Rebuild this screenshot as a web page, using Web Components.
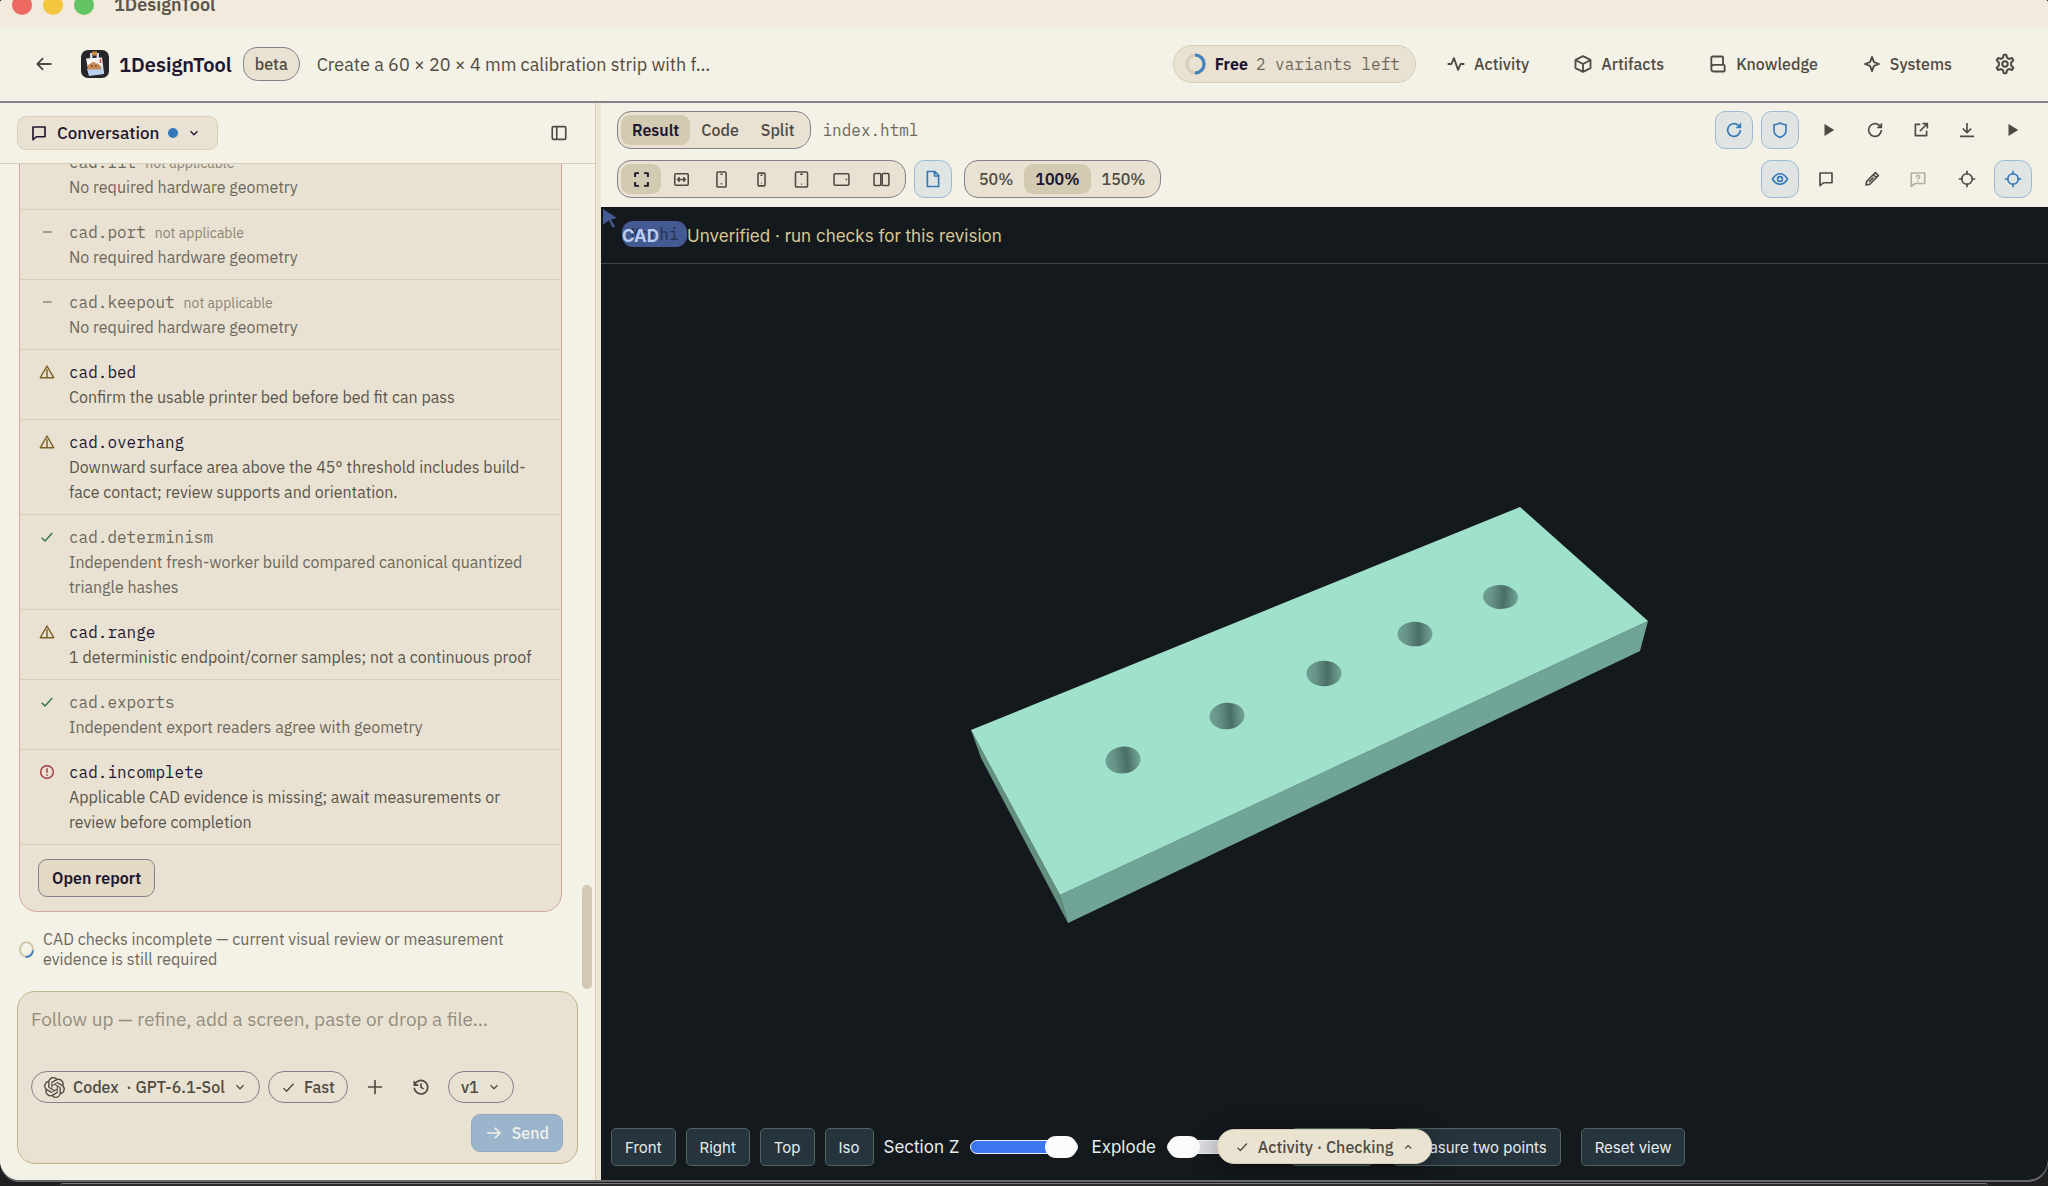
<!DOCTYPE html>
<html lang="en">
<head>
<meta charset="utf-8">
<title>1DesignTool</title>
<style>
  html { height: 100%; background: #1f1e21; }
  body {
    margin: 0; height: 100%; display: flex; flex-direction: column; overflow: hidden;
    --sans: "IBM Plex Sans", Roboto, "Liberation Sans", sans-serif;
    --mono: "IBM Plex Mono", "Liberation Mono", monospace;
    font-family: var(--sans); font-size: 16px; color: #4f4b43;
    --paper: #f4f1e6; --card: #e9e2d2; --sel: #d3cab2; --ink: #1d1730; --text: #4f4b43;
    --muted: #6d685c; --faint: #8b8577; --line: #d8cfb8; --edge: #85808a; --blue: #3579b8;
  }
</style>
</head>
<body>
<design-app></design-app>
<under-window></under-window>
<script>
const ICONS = {
  back: '<path d="M21 12H4M11 5l-7 7 7 7"/>',
  forward: '<path d="M3 12h17M13 5l7 7-7 7"/>',
  chat: '<path d="M4 4h16v13H8.500l-4.500 4z"/>',
  down: '<path d="M6 9l6 6 6-6"/>',
  up: '<path d="M6 15l6-6 6 6"/>',
  panel: '<rect x="3" y="3.500" width="18" height="17" rx="1.500"/><path d="M9 4v16"/>',
  pulse: '<path d="M2 12h4.500l3-7 5 14 3-7H22"/>',
  box: '<path d="M12 2.500l9 4.500v10l-9 4.500L3 17V7zM3.500 7.500L12 12l8.500-4.500M12 12v9"/>',
  book: '<path d="M18 13V4a1 1 0 0 0-1-1H6a2 2 0 0 0-2 2v13a3 3 0 0 0 3 3h12a1 1 0 0 0 1-1v-6a1 1 0 0 0-1-1H7a3 3 0 0 0-3 3"/>',
  spark: '<path d="M12 3.500l2.300 6.200 6.200 2.300-6.200 2.300L12 20.500l-2.300-6.200L3.500 12l6.200-2.300z"/>',
  gear: '<path d="M9.800 5.200L10.600 2h2.800l.8 3.200 2.200 1.300 3.200-1 1.500 2.500-2.400 2.300v3.400l2.400 2.300-1.500 2.500-3.200-1-2.200 1.300-.8 3.200h-2.800l-.8-3.200-2.200-1.300-3.200 1L2.900 16l2.400-2.300v-3.400L2.900 8l1.500-2.500 3.200 1z"/><circle cx="12" cy="12" r="3"/>',
  refresh: '<path d="M20.500 12a8.500 8.500 0 1 1-3-6.500l2.500 2.500M20.500 3v5.500H15"/>',
  shield: '<path d="M12 2.500c2.500 1.800 5 2.500 8 2.500v8c0 4-3 7-8 9-5-2-8-5-8-9V5c3 0 5.500-.7 8-2.500z"/>',
  play: '<path d="M6 4l13 8-13 8z" fill="currentColor" stroke="none"/>',
  open: '<path d="M11 4.500H4.500v15h15V13M14 3.500h6.500V10M20 4l-9.500 9.500"/>',
  download: '<path d="M12 2.500v13M6.500 10l5.500 5.500L17.500 10M2.500 20.500h19"/>',
  eye: '<path d="M2 12c3-5 6.500-7 10-7s7 2 10 7c-3 5-6.500 7-10 7s-7-2-10-7z"/><circle cx="12" cy="12" r="3.200"/>',
  pencil: '<path d="M4 20l1-5L16.500 3.500l4 4L9 19zM14 6.500l3.500 3.500M8 16l6-6"/>',
  ask: '<path d="M3 4h18v14H8l-5 4z"/><path d="M9.800 9.500c0-3 4.600-2.800 4.400-.2-.1 1.500-2.200 1.500-2.200 3.200M12 14.500v1.500"/>',
  target: '<circle cx="12" cy="12" r="7"/><path d="M12 1v5M12 18v5M1 12h5M18 12h5"/>',
  full: '<path d="M3 8.500V3h5.500M15.500 3H21v5.500M21 15.500V21h-5.500M8.500 21H3v-5.500" stroke-width="2.800"/>',
  fit: '<rect x="2.500" y="4" width="19" height="16" rx="1.500"/><path d="M6.500 12h11M9.500 9l-3 3 3 3M14.500 9l3 3-3 3"/>',
  phone: '<rect x="5.500" y="1.500" width="13" height="21" rx="1.500"/><path d="M10.500 4.500h3M11 18h2"/>',
  phoneS: '<rect x="7" y="3" width="10" height="18" rx="1.500"/><path d="M10.500 6h3M11.500 17h1"/>',
  tablet: '<rect x="3.500" y="1.500" width="17" height="21" rx="1.500"/><path d="M10 4.500h4M11.500 18.500h1"/>',
  tabletL: '<rect x="1.500" y="4" width="21" height="16" rx="1.500"/><path d="M19 11v2"/>',
  fold: '<rect x="1.500" y="3.500" width="9.500" height="17" rx="1.500"/><rect x="13" y="3.500" width="9.500" height="17" rx="1.500"/>',
  file: '<path d="M4.500 2h10l5 5v15h-15zM14 2.500V8h5"/>',
  check: '<path d="M4 13l5 5L20 6"/>',
  plus: '<path d="M12 2.500v19M2.500 12h19"/>',
  history: '<path d="M3 4v5.500h5.500M3.500 9.200A9 9 0 1 1 3 13M12 7v5.500l3.500 2"/>',
  dash: '<path d="M6 12h13"/>',
  warn: '<path d="M12 3L22 20.500H2z"/><path d="M12 8v12"/>',
  error: '<circle cx="12" cy="12" r="9.500"/><path d="M12 6.500v6.500M12 15.500v2"/>',
  gpt: '<path fill="currentColor" stroke="none" d="M22.2819 9.8211a5.9847 5.9847 0 0 0-.5157-4.9108 6.0462 6.0462 0 0 0-6.5098-2.9A6.0651 6.0651 0 0 0 4.9807 4.1818a5.9847 5.9847 0 0 0-3.9977 2.9 6.0462 6.0462 0 0 0 .7427 7.0966 5.98 5.98 0 0 0 .511 4.9107 6.051 6.051 0 0 0 6.5146 2.9001A5.9847 5.9847 0 0 0 13.2599 24a6.0557 6.0557 0 0 0 5.7718-4.2058 5.9894 5.9894 0 0 0 3.9977-2.9001 6.0557 6.0557 0 0 0-.7475-7.0729zm-9.022 12.6081a4.4755 4.4755 0 0 1-2.8764-1.0408l.1419-.0804 4.7783-2.7582a.7948.7948 0 0 0 .3927-.6813v-6.7369l2.02 1.1686a.071.071 0 0 1 .038.052v5.5826a4.504 4.504 0 0 1-4.4945 4.4944zm-9.6607-4.1254a4.4708 4.4708 0 0 1-.5346-3.0137l.142.0852 4.783 2.7582a.7712.7712 0 0 0 .7806 0l5.8428-3.3685v2.3324a.0804.0804 0 0 1-.0332.0615L9.74 19.9502a4.4992 4.4992 0 0 1-6.1408-1.6464zM2.3408 7.8956a4.485 4.485 0 0 1 2.3655-1.9728V11.6a.7664.7664 0 0 0 .3879.6765l5.8144 3.3543-2.0201 1.1685a.0757.0757 0 0 1-.071 0l-4.8303-2.7865A4.504 4.504 0 0 1 2.3408 7.872zm16.5963 3.8558L13.1038 8.364 15.1192 7.2a.0757.0757 0 0 1 .071 0l4.8303 2.7913a4.4944 4.4944 0 0 1-.6765 8.1042v-5.6772a.79.79 0 0 0-.407-.667zm2.0107-3.0231l-.142-.0852-4.7735-2.7818a.7759.7759 0 0 0-.7854 0L9.409 9.2297V6.8974a.0662.0662 0 0 1 .0284-.0615l4.8303-2.7866a4.4992 4.4992 0 0 1 6.6802 4.66zM8.3065 12.863l-2.02-1.1638a.0804.0804 0 0 1-.038-.0567V6.0742a4.4992 4.4992 0 0 1 7.3757-3.4537l-.142.0805L8.704 5.459a.7948.7948 0 0 0-.3927.6813zm1.0976-2.3654l2.602-1.4998 2.6069 1.4998v2.9994l-2.5974 1.4997-2.6067-1.4997z"/>'
};

const BASE = `
  *, *::before, *::after { box-sizing: border-box; }
  :host { display: block; }
  button, select, textarea, input { font: inherit; color: inherit; margin: 0; }
  button { display: flex; align-items: center; border: 0; background: none; padding: 0; white-space: nowrap; }
`;
function define(name, css, html) {
  customElements.define(name, class extends HTMLElement {
    connectedCallback() {
      if (this.shadowRoot) return;
      const root = this.attachShadow({ mode: "open" });
      root.innerHTML = "<style>" + BASE + css + "</style>" + (typeof html === "function" ? html(this) : html);
    }
  });
}

define("ui-icon", `
  :host { display: inline-flex; flex: none; }
  svg { display: block; fill: none; stroke: currentColor; stroke-width: 2.2; stroke-linejoin: round; }
`, el => `<svg width="${el.getAttribute("size") || 18}" height="${el.getAttribute("size") || 18}" viewBox="0 0 24 24" aria-hidden="true">${ICONS[el.getAttribute("name")]}</svg>`);

define("title-bar", `
  :host { display: flex; align-items: center; gap: 11px; height: 27px; padding: 0 12px; background: #f2eadc; overflow: hidden; flex: none; }
  i { width: 20px; height: 20px; border-radius: 50%; margin-top: -18px; }
  b { font-size: 18px; line-height: 20px; font-weight: 600; margin: -18px 0 0 9px; color: #5b564e; }
`, `<i style="background:#ec6a62"></i><i style="background:#f2c63f"></i><i style="background:#62c462"></i><b>1DesignTool</b>`);

define("nav-button", `
  button { height: 38px; padding: 0 16px; gap: 8px; font-weight: 500; color: var(--text); }
  :host([icon-only]) button { padding-left: 14px; }
`, el => `<button aria-label="${el.getAttribute("label")}"><ui-icon name="${el.getAttribute("icon")}" size="${el.getAttribute("size") || 20}"></ui-icon><slot></slot></button>`);

define("app-header", `
  :host { display: flex; align-items: center; height: 76px; padding: 0 16px 0 20px; border-bottom: 2px solid var(--edge); background: var(--paper); flex: none; }
  .back { width: 48px; height: 38px; justify-content: center; margin-right: 13px; }
  .name { margin: 0 11px 0 10px; font-size: 20px; font-weight: 600; color: var(--ink); }
  .beta { height: 34px; padding: 0 11px; display: flex; align-items: center; border: 1px solid var(--edge); border-radius: 16px 20px 20px 17px; background: var(--card); font-weight: 500; }
  .project { margin-left: 17px; font-size: 18px; flex: 1; min-width: 0; white-space: nowrap; }
  .plan { height: 38px; padding: 0 15px 0 11px; margin-right: 14px; border: 1px solid var(--line); border-radius: 19px; background: var(--card); gap: 8px; }
  .plan b { font-weight: 700; color: var(--ink); }
  .plan span { font-family: var(--mono); color: var(--muted); }
  nav { display: flex; gap: 12px; }
`, `
  <button class="back" aria-label="Back"><ui-icon name="back" size="20"></ui-icon></button>
  <svg width="28" height="28" viewBox="0 0 28 28" aria-hidden="true">
    <rect width="28" height="28" rx="7" fill="#27262b"/>
    <path d="M9 3h9v6H9z" fill="#cdd6e4"/><path d="M11 1.500h5v4h-5z" fill="#c98a3c"/><path d="M11.500 5.500h4v2.500h-4z" fill="#27262b"/>
    <path d="M5 8.500l16-1 2 16-15 1z" fill="#f6f3ef"/>
    <path d="M6 19l15-3 2 8-15 2z" fill="#b9d0f2"/>
    <path d="M7 19.500c-1-5 2-6 3-6l2.500-2 2.500 2c4 0 5 2.500 5 6z" fill="#c58a55"/><circle cx="11" cy="16" r="1" fill="#7b4c2a"/><circle cx="15" cy="16" r="1" fill="#7b4c2a"/>
    <path d="M19.500 9v4" stroke="#c9504c" stroke-width="1.500"/>
  </svg>
  <span class="name">1DesignTool</span><span class="beta">beta</span>
  <span class="project">Create a 60 × 20 × 4 mm calibration strip with f…</span>
  <button class="plan"><svg width="22" height="22" viewBox="0 0 22 22" aria-hidden="true"><circle cx="11" cy="11" r="9" fill="none" stroke="#d6cdb8" stroke-width="3"/><path d="M10 2a9 9 0 1 1 0 18" fill="none" stroke="#3b7fc0" stroke-width="3"/></svg><b>Free</b><span>2 variants left</span></button>
  <nav>
    <nav-button icon="pulse" label="Activity">Activity</nav-button>
    <nav-button icon="box" label="Artifacts">Artifacts</nav-button>
    <nav-button icon="book" label="Knowledge">Knowledge</nav-button>
    <nav-button icon="spark" label="Systems">Systems</nav-button>
    <nav-button icon-only icon="gear" size="22" label="Settings"></nav-button>
  </nav>
`);

define("check-row", `
  :host { display: grid; grid-template-columns: 18px 1fr; column-gap: 13px; padding: 10px 20px 9px 18px; border-bottom: 1px solid var(--line); color: var(--muted); }
  .icon { height: 24px; display: flex; align-items: center; justify-content: center; color: var(--faint); }
  .warn { color: #7d6228; } .check { color: #38744c; } .error { color: #a43b3f; }
  .title { height: 25px; line-height: 24px; font-family: var(--mono); }
  :host([strong]) .title { color: var(--ink); }
  :host([strong]) { color: #5a554b; }
  small { font: 14px/24px var(--sans); color: var(--faint); margin-left: 9px; }
  p { margin: 0; line-height: 25px; grid-column: 2; }
`, el => { const k = el.getAttribute("kind"); return `<span class="icon ${k}"><ui-icon name="${k}" size="16"></ui-icon></span><div class="title">${el.getAttribute("check")}${k === "dash" ? "<small>not applicable</small>" : ""}</div><p><slot></slot></p>`; });

define("chat-panel", `
  :host { display: flex; flex-direction: column; width: 596px; flex: none; position: relative; border-right: 1px solid var(--line); background: var(--paper); }
  header { display: flex; align-items: center; justify-content: space-between; height: 61px; flex: none; padding: 0 27px 0 17px; border-bottom: 1px solid var(--line); }
  .conv { height: 34px; padding: 0 16px 0 12px; gap: 9px; border: 1px solid var(--line); border-radius: 9px; background: var(--card); color: var(--ink); font-size: 17px; font-weight: 500; }
  .dot { width: 10px; height: 10px; border-radius: 50%; background: var(--blue); }
  .thread { flex: 1; min-height: 0; overflow: hidden; display: flex; flex-direction: column; justify-content: flex-end; padding: 0 33px 0 19px; }
  .report { flex: none; border: 1px solid #d2a79d; border-radius: 18px; background: var(--card); }
  .foot { padding: 14px 18px; }
  .open { height: 38px; padding: 0 13px; border: 1px solid var(--edge); border-radius: 9px 8px 10px 9px; background: #e3dac6; color: var(--ink); font-weight: 600; }
  .status { flex: none; display: flex; align-items: center; gap: 9px; padding: 17px 0 22px; color: var(--muted); line-height: 20px; }
  .status svg { flex: none; }
  .thumb { position: absolute; right: 3px; bottom: 191px; width: 10px; height: 104px; border-radius: 5px; background: #d3c9b2; }
  form { flex: none; margin: 0 17px 16px; padding: 12px 14px 11px 13px; border: 1px solid #bfb489; border-radius: 18px; background: var(--card); }
  textarea { display: block; width: 100%; height: 67px; border: 0; padding: 0; background: none; resize: none; outline: 0; font-size: 19px; line-height: 30px; }
  textarea::placeholder { color: #948e80; opacity: 1; }
  .tools { display: flex; align-items: center; gap: 8px; }
  .pill { display: flex; align-items: center; height: 32px; border: 1px solid var(--edge); border-radius: 16px; padding: 0 12px; gap: 8px; font-weight: 500; }
  .pill select { appearance: none; border: 0; background: none; padding: 0; outline: 0; font-weight: 500; }
  .tool { width: 38px; height: 32px; justify-content: center; }
  .send { height: 38px; margin: 11px 0 0 auto; padding: 0 13px; gap: 9px; border: 1px solid #92aabc; border-radius: 9px; background: #9ab5cc; color: #f3f1ea; font-weight: 500; }
`, `
  <header>
    <button class="conv"><ui-icon name="chat" size="18"></ui-icon>Conversation<span class="dot"></span><ui-icon name="down" size="14"></ui-icon></button>
    <button aria-label="Toggle panel"><ui-icon name="panel" size="18"></ui-icon></button>
  </header>
  <div class="thread">
    <section class="report">
      <check-row kind="dash" check="cad.fit">No required hardware geometry</check-row>
      <check-row kind="dash" check="cad.port">No required hardware geometry</check-row>
      <check-row kind="dash" check="cad.keepout">No required hardware geometry</check-row>
      <check-row kind="warn" check="cad.bed" strong>Confirm the usable printer bed before bed fit can pass</check-row>
      <check-row kind="warn" check="cad.overhang" strong>Downward surface area above the 45° threshold includes build-face contact; review supports and orientation.</check-row>
      <check-row kind="check" check="cad.determinism">Independent fresh-worker build compared canonical quantized triangle hashes</check-row>
      <check-row kind="warn" check="cad.range" strong>1 deterministic endpoint/corner samples; not a continuous proof</check-row>
      <check-row kind="check" check="cad.exports">Independent export readers agree with geometry</check-row>
      <check-row kind="error" check="cad.incomplete" strong>Applicable CAD evidence is missing; await measurements or review before completion</check-row>
      <div class="foot"><button class="open">Open report</button></div>
    </section>
    <div class="status"><svg width="15" height="17" viewBox="0 0 15 17" aria-hidden="true"><ellipse cx="7.500" cy="8.500" rx="6.500" ry="7.300" fill="none" stroke="#cfc4a4" stroke-width="1.800"/><path d="M6.500 15.700A6.500 7.300 0 0 0 14 9.500" fill="none" stroke="#3b7fc0" stroke-width="2"/></svg>
      <span>CAD checks incomplete — current visual review or measurement evidence is still required</span></div>
  </div>
  <form onsubmit="return false">
    <textarea aria-label="Follow up" placeholder="Follow up — refine, add a screen, paste or drop a file…"></textarea>
    <div class="tools">
      <label class="pill"><ui-icon name="gpt" size="21"></ui-icon><select aria-label="Model"><option>Codex&nbsp; · GPT-6.1-Sol</option></select><ui-icon name="down" size="14"></ui-icon></label>
      <button class="pill" type="button"><ui-icon name="check" size="15"></ui-icon>Fast</button>
      <button class="tool" type="button" aria-label="Add"><ui-icon name="plus" size="18"></ui-icon></button>
      <button class="tool" type="button" aria-label="History"><ui-icon name="history" size="18"></ui-icon></button>
      <label class="pill"><select aria-label="Version"><option>v1</option></select><ui-icon name="down" size="14"></ui-icon></label>
    </div>
    <button class="send"><ui-icon name="forward" size="18"></ui-icon>Send</button>
  </form>
  <div class="thumb"></div>
`);

define("tool-button", `
  button { width: 38px; height: 38px; justify-content: center; border: 1px solid transparent; border-radius: 10px 12px 11px 10px; color: var(--text); }
  :host([active]) button { background: #e0e5e4; border-color: #9dbad3; color: var(--blue); }
  :host([faded]) button { color: #b5afa2; }
`, el => `<button aria-label="${el.getAttribute("label")}"><ui-icon name="${el.getAttribute("icon")}" size="18"></ui-icon></button>`);

define("segment-group", `
  :host { display: flex; height: 38px; padding: 3px 4px 3px 3px; border: 1px solid var(--edge); border-radius: 14px 15px 17px 14px; background: var(--card); }
`, `<slot></slot>`);
define("segment-item", `
  button { height: 30px; min-width: 40px; justify-content: center; border-radius: 9px; padding: 0 11px; color: var(--text); font-weight: 500; }
  :host([icon]) button { padding: 0; }
  :host([selected]) button { background: var(--sel); color: var(--ink); font-weight: 600; }
`, el => `<button aria-label="${el.getAttribute("label")}">${el.hasAttribute("icon") ? `<ui-icon name="${el.getAttribute("icon")}" size="17"></ui-icon>` : "<slot></slot>"}</button>`);

define("work-toolbar", `
  :host { display: flex; flex-direction: column; gap: 11px; height: 104px; padding: 8px 16px 0; background: var(--paper); flex: none; }
  .row { display: flex; align-items: center; gap: 8px; height: 38px; }
  .file { font-family: var(--mono); color: var(--muted); margin-left: 4px; }
  .zoom { margin-left: 4px; }
  .right { display: flex; gap: 11px; margin-left: auto; }
  .set { display: flex; gap: 8px; }
`, `
  <div class="row">
    <segment-group><segment-item label="Result" selected>Result</segment-item><segment-item label="Code">Code</segment-item><segment-item label="Split">Split</segment-item></segment-group>
    <span class="file">index.html</span>
    <div class="right">
      <div class="set"><tool-button active icon="refresh" label="Auto refresh"></tool-button><tool-button active icon="shield" label="Sandbox"></tool-button></div>
      <div class="set"><tool-button icon="play" label="Play"></tool-button><tool-button icon="refresh" label="Reload"></tool-button><tool-button icon="open" label="Open"></tool-button><tool-button icon="download" label="Download"></tool-button><tool-button icon="play" label="Present"></tool-button></div>
    </div>
  </div>
  <div class="row">
    <segment-group><segment-item icon="full" selected label="Fill"></segment-item><segment-item icon="fit" label="Fit"></segment-item><segment-item icon="phone" label="Phone"></segment-item><segment-item icon="phoneS" label="Small phone"></segment-item><segment-item icon="tablet" label="Tablet"></segment-item><segment-item icon="tabletL" label="Landscape"></segment-item><segment-item icon="fold" label="Fold"></segment-item></segment-group>
    <tool-button active icon="file" label="Page"></tool-button>
    <segment-group class="zoom"><segment-item label="50%">50%</segment-item><segment-item label="100%" selected>100%</segment-item><segment-item label="150%">150%</segment-item></segment-group>
    <div class="right">
      <div class="set"><tool-button active icon="eye" label="Watch"></tool-button><tool-button icon="chat" label="Comment"></tool-button><tool-button icon="pencil" label="Draw"></tool-button><tool-button faded icon="ask" label="Ask"></tool-button></div>
      <div class="set"><tool-button icon="target" label="Target"></tool-button><tool-button active icon="target" label="Select"></tool-button></div>
    </div>
  </div>
`);

define("cad-button", `
  button { width: 100%; height: 38px; min-width: 47px; padding: 0 13px; justify-content: center; border: 1px solid #50655f; border-radius: 5px; background: #26343d; color: #e6ecec; font-family: Inter, sans-serif; font-size: 15px; }
`, `<button><slot></slot></button>`);

define("cad-viewer", `
  :host { display: flex; flex-direction: column; flex: 1; min-height: 0; position: relative; background: #14191d; font-family: Inter, sans-serif; font-size: 17px; }
  .top { display: flex; align-items: center; height: 57px; flex: none; border-bottom: 1px solid #3c464e; padding: 2px 0 0 21px; gap: 28px; position: relative; color: #d9c896; }
  .top b { color: #b9cdf2; font-weight: 700; position: relative; }
  .cursor { position: absolute; left: 2px; top: 2px; }
  .tag { position: absolute; left: 21px; top: 14px; width: 65px; height: 26px; border-radius: 11px; background: #435a93; color: #26314e; font: 16px/26px var(--mono); text-align: center; }
  .scene { flex: 1; min-height: 0; width: 100%; }
  .bar { display: flex; align-items: center; gap: 10px; padding: 0 10px 14px; flex: none; color: #e8eded; }
  label { display: flex; align-items: center; gap: 11px; margin-right: 3px; }
  input { appearance: none; width: 108px; height: 14px; border-radius: 7px; border: 1px solid #eef1f4; background: #dcdce0; }
  input.full { background: #3b76ee; }
  input::-webkit-slider-thumb { appearance: none; width: 32px; height: 22px; border-radius: 11px; background: #fbfbfb; }
  .actions { display: flex; gap: 20px; margin-left: 3px; }
  .blank { width: 82px; }
  .float { position: absolute; left: 50%; bottom: 16px; transform: translateX(-50%); height: 35px; padding: 0 17px; gap: 9px; border: 1px solid var(--line); border-radius: 17px; background: #ebe3d2; color: var(--text); font: 500 16px var(--sans); box-shadow: 0 4px 24px rgba(0,0,0,.4); }
`, `
  <div class="top"><svg class="cursor" width="15" height="19" viewBox="0 0 15 19" aria-hidden="true"><path d="M0 0l14 9-6 1.500 4 7-2.500 1-3.500-7-6 4z" fill="#435a93"/></svg><span class="tag">Mochi</span><b>CAD</b><span>Unverified · run checks for this revision</span></div>
  <svg class="scene" viewBox="0 0 1447 864" preserveAspectRatio="xMidYMid meet" role="img" aria-label="Calibration strip">
    <defs><linearGradient id="h"><stop offset="0" stop-color="#6f9f93"/><stop offset=".25" stop-color="#679488"/><stop offset=".6" stop-color="#4a6e66"/><stop offset="1" stop-color="#73a698"/></linearGradient></defs>
    <g transform="translate(-601 -264)">
      <path d="M971 730L981 758L1068 923L1060 895z" fill="#64917f"/>
      <path d="M1060 895L1648 621L1640 651L1068 923z" fill="#71a498"/>
      <path d="M971 730L1520 507L1648 621L1060 895z" fill="#9fe1cb"/>
      <g fill="url(#h)"><ellipse cx="1123" cy="760" rx="17.500" ry="13.500" transform="rotate(-8 1123 760)"/><ellipse cx="1227" cy="716" rx="17.500" ry="13.300" transform="rotate(-5 1227 716)"/><ellipse cx="1324" cy="673.500" rx="17.500" ry="12.800"/><ellipse cx="1415" cy="634" rx="17.500" ry="12.300"/><ellipse cx="1500.500" cy="597" rx="17.500" ry="12" transform="rotate(4 1500 597)"/></g>
    </g>
  </svg>
  <div class="bar">
    <cad-button>Front</cad-button><cad-button>Right</cad-button><cad-button>Top</cad-button><cad-button>Iso</cad-button>
    <label>Section Z<input class="full" type="range" value="100"></label>
    <label>Explode<input type="range" value="0"></label>
    <div class="actions"><cad-button class="blank"></cad-button><cad-button>Measure two points</cad-button><cad-button>Reset view</cad-button></div>
  </div>
  <button class="float"><ui-icon name="check" size="14"></ui-icon>Activity · Checking<ui-icon name="up" size="12"></ui-icon></button>
`);

define("under-window", `
  :host { flex: none; height: 2px; margin: 1px 60px 0; border-top: 1px solid #7b7a7a; border-radius: 8px 8px 0 0; background: #2c2a2c; }
`, ``);

define("design-app", `
  :host { display: flex; flex-direction: column; flex: 1; min-height: 0; margin-bottom: 2px; overflow: hidden; border-radius: 3px 3px 20px 20px; background: var(--paper); box-shadow: 0 2px 0 #666567; }
  main { display: flex; flex: 1; min-height: 0; }
  .split { width: 5px; flex: none; background: #ece5d4; }
  .work { flex: 1; min-width: 0; display: flex; flex-direction: column; }
`, `<title-bar></title-bar><app-header></app-header><main><chat-panel></chat-panel><div class="split"></div><div class="work"><work-toolbar></work-toolbar><cad-viewer></cad-viewer></div></main>`);
</script>
</body>
</html>
